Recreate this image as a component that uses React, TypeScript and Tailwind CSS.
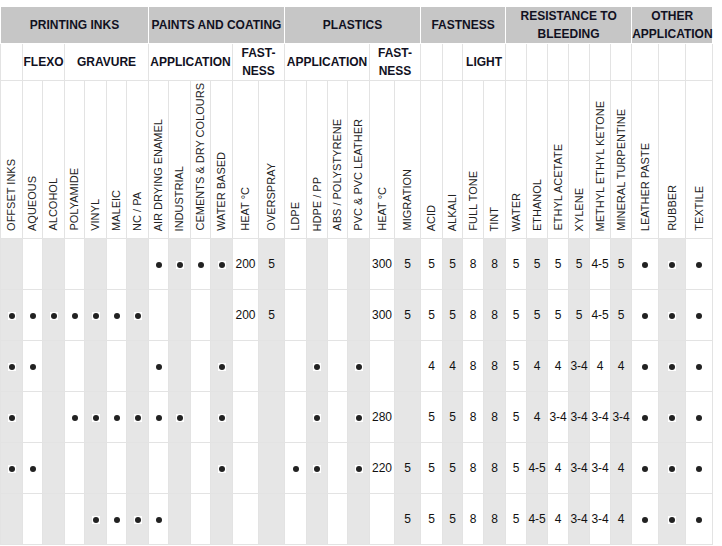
const cols: { label: string; w: number }[] = [
  { label: "OFFSET INKS", w: 22 },
  { label: "AQUEOUS", w: 20 },
  { label: "ALCOHOL", w: 22 },
  { label: "POLYAMIDE", w: 20 },
  { label: "VINYL", w: 22 },
  { label: "MALEIC", w: 20 },
  { label: "NC / PA", w: 22 },
  { label: "AIR DRYING ENAMEL", w: 20 },
  { label: "INDUSTRIAL", w: 22 },
  { label: "CEMENTS & DRY COLOURS", w: 20 },
  { label: "WATER BASED", w: 22 },
  { label: "HEAT °C", w: 26 },
  { label: "OVERSPRAY", w: 26 },
  { label: "LDPE", w: 22 },
  { label: "HDPE / PP", w: 21 },
  { label: "ABS / POLYSTYRENE", w: 20 },
  { label: "PVC & PVC LEATHER", w: 22 },
  { label: "HEAT °C", w: 25 },
  { label: "MIGRATION", w: 26 },
  { label: "ACID", w: 22 },
  { label: "ALKALI", w: 20 },
  { label: "FULL TONE", w: 21 },
  { label: "TINT", w: 22 },
  { label: "WATER", w: 21 },
  { label: "ETHANOL", w: 21 },
  { label: "ETHYL ACETATE", w: 21 },
  { label: "XYLENE", w: 21 },
  { label: "METHYL ETHYL KETONE", w: 21 },
  { label: "MINERAL TURPENTINE", w: 21 },
  { label: "LEATHER PASTE", w: 27 },
  { label: "RUBBER", w: 27 },
  { label: "TEXTILE", w: 27 },
];

const rows: string[][] = [
  ["", "", "", "", "", "", "", "d", "d", "d", "d", "200", "5", "", "", "", "", "300", "5", "5", "5", "8", "8", "5", "5", "5", "5", "4-5", "5", "d", "d", "d"],
  ["d", "d", "d", "d", "d", "d", "d", "", "", "", "", "200", "5", "", "", "", "", "300", "5", "5", "5", "8", "8", "5", "5", "5", "5", "4-5", "5", "d", "d", "d"],
  ["d", "d", "", "", "", "", "", "d", "", "", "d", "", "", "", "d", "", "d", "", "", "4", "4", "8", "8", "5", "4", "4", "3-4", "4", "4", "d", "d", "d"],
  ["d", "", "", "d", "d", "d", "d", "d", "d", "", "d", "", "", "", "d", "", "d", "280", "", "5", "5", "8", "8", "5", "4", "3-4", "3-4", "3-4", "3-4", "d", "d", "d"],
  ["d", "d", "", "", "", "", "", "", "", "", "d", "", "", "d", "d", "", "d", "220", "5", "5", "5", "8", "8", "5", "4-5", "4", "3-4", "3-4", "4", "d", "d", "d"],
  ["", "", "", "", "d", "d", "d", "d", "", "", "", "", "", "", "", "", "", "", "5", "5", "5", "8", "8", "5", "4-5", "4", "3-4", "3-4", "4", "d", "d", "d"],
];

const groups = [
  { label: "PRINTING INKS", span: 7 },
  { label: "PAINTS AND COATING", span: 6 },
  { label: "PLASTICS", span: 6 },
  { label: "FASTNESS", span: 4 },
  { label: "RESISTANCE TO BLEEDING", span: 6 },
  { label: "OTHER APPLICATION", span: 3 },
];

const subs = [
  { label: "", span: 1 },
  { label: "FLEXO", span: 2 },
  { label: "GRAVURE", span: 4 },
  { label: "APPLICATION", span: 4 },
  { label: "FAST-NESS", span: 2 },
  { label: "APPLICATION", span: 4 },
  { label: "FAST-NESS", span: 2 },
  { label: "", span: 1 },
  { label: "", span: 1 },
  { label: "LIGHT", span: 2 },
  ...Array.from({ length: 9 }, () => ({ label: "", span: 1 })),
];

function Dot() {
  return (
    <span className="inline-flex h-[8px] w-[8px] items-center justify-center bg-white align-middle">
      <span className="h-[6px] w-[6px] rounded-full bg-[#222]" />
    </span>
  );
}

export default function App() {
  return (
    <div className="bg-white pt-[6px] font-['Liberation_Sans',Arial,sans-serif]">
      <table className="w-[713px] table-fixed border-collapse text-center">
        <colgroup>
          {cols.map((c, i) => (
            <col key={i} style={{ width: c.w }} />
          ))}
        </colgroup>
        <thead>
          <tr className="h-[35px] bg-[#c6c6c6]">
            {groups.map((g, i) => (
              <th
                key={i}
                colSpan={g.span}
                className="border border-white p-0 text-[12px] leading-[18px] font-bold text-[#111122]"
              >
                {g.label === "RESISTANCE TO BLEEDING" ? (
                  <>RESISTANCE TO<br />BLEEDING</>
                ) : g.label === "OTHER APPLICATION" ? (
                  <>OTHER<br />APPLICATION</>
                ) : (
                  g.label
                )}
              </th>
            ))}
          </tr>
          <tr className="h-[37px]">
            {subs.map((s, i) => (
              <th
                key={i}
                colSpan={s.span}
                className="border border-[#e3e3e3] p-0 text-[12px] leading-[18px] font-bold whitespace-nowrap text-[#111122]"
              >
                {s.label === "FAST-NESS" ? (
                  <>FAST-<br />NESS</>
                ) : (
                  s.label
                )}
              </th>
            ))}
          </tr>
          <tr className="h-[158px]">
            {cols.map((c, i) => (
              <th
                key={i}
                className="border border-[#e3e3e3] p-0 pb-[7px] align-bottom text-[11px] leading-none font-normal text-[#222]"
              >
                <span className="inline-block rotate-180 align-top whitespace-nowrap [writing-mode:vertical-rl]">
                  {c.label}
                </span>
              </th>
            ))}
          </tr>
        </thead>
        <tbody>
          {rows.map((r, ri) => (
            <tr key={ri} className="h-[51px]">
              {r.map((v, ci) => (
                <td
                  key={ci}
                  className={
                    ci % 2 === 0
                      ? "border border-[#e3e3e3] bg-[#e6e6e6] p-0 text-[12px] whitespace-nowrap text-[#111]"
                      : "border border-[#e3e3e3] bg-white p-0 text-[12px] whitespace-nowrap text-[#111]"
                  }
                >
                  {v === "d" ? <Dot /> : v}
                </td>
              ))}
            </tr>
          ))}
        </tbody>
      </table>
    </div>
  );
}
